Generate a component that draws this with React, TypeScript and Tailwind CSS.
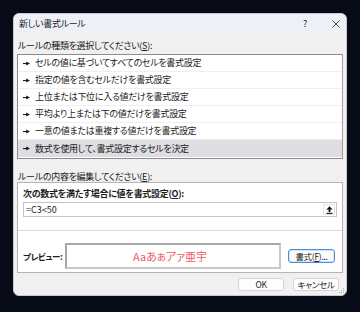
import React from "react";

const rules = [
  "セルの値に基づいてすべてのセルを書式設定",
  "指定の値を含むセルだけを書式設定",
  "上位または下位に入る値だけを書式設定",
  "平均より上または下の値だけを書式設定",
  "一意の値または重複する値だけを書式設定",
  "数式を使用して、書式設定するセルを決定",
];

function Arrow() {
  return (
    <svg width="7" height="5" viewBox="0 0 7 5" className="shrink-0">
      <rect x="0" y="2" width="4" height="1.1" fill="#1a1a1a" />
      <path d="M3.2 0.4 L7 2.5 L3.2 4.6 Z" fill="#1a1a1a" />
    </svg>
  );
}

function Btn({ children, focus }: { children: React.ReactNode; focus?: boolean }) {
  return (
    <button
      className={
        focus
          ? "flex h-[14px] w-[47px] items-center justify-center whitespace-nowrap rounded-[3px] border border-[#4a90d9] bg-[#fdfdfd] text-[8.5px] leading-none text-[#1b1b1b] shadow-[inset_0_0_0_1px_#cfe3f7]"
          : "flex h-[13px] w-[46px] items-center justify-center whitespace-nowrap rounded-[3px] border border-[#d4d4d4] bg-[#fdfdfd] text-[8.5px] leading-none text-[#1b1b1b]"
      }
    >
      {children}
    </button>
  );
}

export default function App() {
  return (
    <div className="h-[312px] w-[360px] overflow-hidden bg-[#060b17] pl-[13px] pt-[13px] font-['Noto_Sans_CJK_JP','Noto_Sans',sans-serif] [font-feature-settings:'palt'] tracking-[-0.3px] text-[#1b1b1b]">
      <div className="relative flex h-[283px] w-[334px] flex-col overflow-hidden rounded-[6px] border border-[#c8c8c8] bg-[#f0f0f0]">
        {/* title bar */}
        <div className="flex h-[19px] shrink-0 items-center bg-[#eef0f8] pl-[5px] pr-[6px] text-[9px]">
          <span className="flex-1">新しい書式ルール</span>
          <span className="mr-[25px] text-[9px]">?</span>
          <svg width="8" height="8" viewBox="0 0 8 8">
            <path d="M0.5 0.5 L7.5 7.5 M7.5 0.5 L0.5 7.5" stroke="#333" strokeWidth="0.9" />
          </svg>
        </div>

        <div className="flex flex-col px-[3px]">
          <div className="mt-[6px] h-[14px] pl-[1px] text-[9px] leading-[14px]">
            ルールの種類を選択してください(<span className="underline">S</span>):
          </div>

          {/* rule type list */}
          <div className="mt-[1px] flex h-[105px] flex-col border border-[#8c8c8c] border-r-[#a0a0a0] bg-white">
            {rules.map((r, i) => (
              <div
                key={r}
                className={
                  i === rules.length - 1
                    ? "flex h-[17px] items-center gap-[5px] bg-[#dddde2] pl-[5px] text-[9px]"
                    : "flex h-[17px] items-center gap-[5px] border-b border-[#efefef] pl-[5px] text-[9px]"
                }
              >
                <Arrow />
                <span>{r}</span>
              </div>
            ))}
          </div>

          <div className="mt-[12px] h-[11px] pl-[1px] text-[9px] leading-[11px]">
            ルールの内容を編集してください(<span className="underline">E</span>):
          </div>

          {/* rule description panel */}
          <div className="flex h-[91px] flex-col border border-[#b4b4b4] bg-white">
            <div className="mt-[4px] h-[14px] pl-[5px] text-[9px] font-bold leading-[14px]">
              次の数式を満たす場合に値を書式設定(<span className="underline">O</span>):
            </div>
            <div className="mx-[5px] mt-[1px] flex h-[15px] items-center border border-[#c4c4c4] bg-white pl-[2px] pr-[1px]">
              <span className="flex-1 text-[9px] tracking-[0px]">=C3&lt;50</span>
              <div className="flex h-[11px] w-[12px] items-center justify-center rounded-[1px] border border-[#e2e2e2] bg-white">
                <svg width="7" height="8" viewBox="0 0 7 8">
                  <path d="M3.5 0.3 L6.6 3.6 L4.4 3.6 L4.4 6 L2.6 6 L2.6 3.6 L0.4 3.6 Z" fill="#111" />
                  <rect x="0.5" y="6.8" width="6" height="1.1" fill="#111" />
                </svg>
              </div>
            </div>
            <div className="mt-[13px] h-px bg-[#dcdcdc]" />
            <div className="mt-[12px] flex h-[26px] items-center pl-[5px]">
              <span className="w-[42px] shrink-0 whitespace-nowrap text-[8.5px] font-bold tracking-[-0.4px]">プレビュー:</span>
              <div className="flex h-[26px] w-[216px] shrink-0 items-center justify-center border-2 border-[#a8a8a8] border-b-[#c8c8c8] border-r-[#c8c8c8] bg-white pr-[6px] text-[11px] tracking-[0px] text-[#f05a64]">
                Aaあぁアァ亜宇
              </div>
              <div className="ml-[7px]">
                <Btn focus>
                  書式(<span className="underline">F</span>)...
                </Btn>
              </div>
            </div>
          </div>

          {/* buttons */}
          <div className="mt-[5px] flex justify-end gap-[9px] pr-[4px]">
            <Btn>OK</Btn>
            <Btn>キャンセル</Btn>
          </div>
        </div>

        <svg width="6" height="6" viewBox="0 0 6 6" className="absolute bottom-[1px] right-[1px]">
          <rect x="4" y="0" width="1" height="1" fill="#b0b0b0" />
          <rect x="2" y="2" width="1" height="1" fill="#b0b0b0" />
          <rect x="4" y="2" width="1" height="1" fill="#b0b0b0" />
          <rect x="0" y="4" width="1" height="1" fill="#b0b0b0" />
          <rect x="2" y="4" width="1" height="1" fill="#b0b0b0" />
          <rect x="4" y="4" width="1" height="1" fill="#b0b0b0" />
        </svg>
      </div>
    </div>
  );
}
